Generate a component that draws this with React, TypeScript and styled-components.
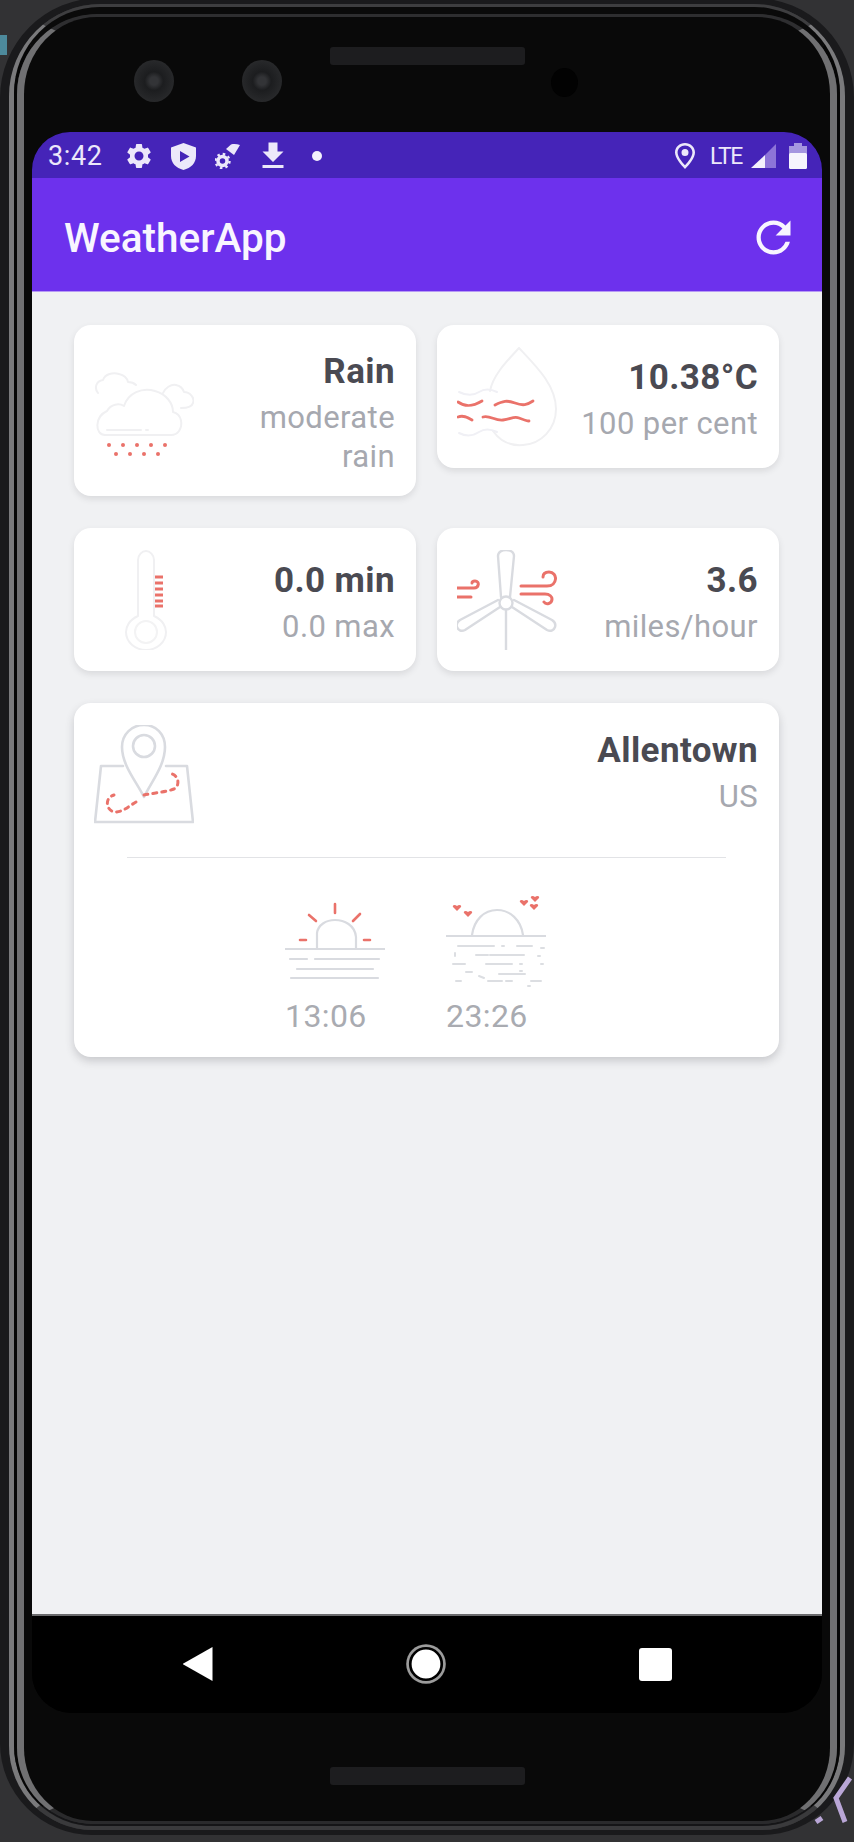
import { FC } from "react";
import styled, { createGlobalStyle } from "styled-components";
import { MdRefresh, MdSettings, MdFileDownload } from "react-icons/md";

const GlobalStyle = createGlobalStyle`
  html, body {
    margin: 0;
    padding: 0;
    background: #323234;
  }
  * {
    box-sizing: border-box;
  }
`;

const RED = "#ea726a";
const FAINT = "#f0f0f2";
const LINE = "#d9dbe0";

const Page = styled.div`
  position: relative;
  width: 854px;
  height: 1842px;
  overflow: hidden;
  background: #323234;
  font-family: Roboto, "Liberation Sans", sans-serif;
`;

const Phone = styled.div`
  height: 1837px;
  margin-top: -2px;
  border: solid #1a1a1c;
  border-width: 6px 9px 5px;
  border-radius: 100px 100px 92px 92px;
`;

const OuterRim = styled.div`
  height: 100%;
  border: solid #7a7a7c;
  border-color: #3e3e40 #7a7a7c #3a3a3c;
  border-width: 3px 5px 4px;
  border-radius: 92px 92px 84px 84px;
`;

const Groove = styled.div`
  height: 100%;
  border: solid #060606;
  border-color: #0a0a0a #060606 #151517;
  border-width: 7px 3px 2px;
  border-radius: 86px 86px 80px 80px;
`;

const InnerRim = styled.div`
  height: 100%;
  background: #090909;
  border: solid #707072;
  border-color: #2e2e30 #707072 #2a2a2c;
  border-width: 3px 7px;
  border-radius: 80px 80px 76px 76px;
`;

const Face = styled.div`
  display: flex;
  flex-direction: column;
  height: 100%;
  padding: 0 8px;
`;

const TopBezel = styled.div`
  position: relative;
  flex: none;
  height: 115px;
`;

const Camera = styled.div<{ $left: number }>`
  position: absolute;
  top: 43px;
  left: ${(p) => p.$left}px;
  width: 40px;
  height: 42px;
  border-radius: 50%;
  background: radial-gradient(circle, #333437 0 14%, #1c1d1f 32%, #28292b 72%, #131415 100%);
`;

const Speaker = styled.div<{ $top: number }>`
  position: absolute;
  top: ${(p) => p.$top}px;
  left: 298px;
  width: 195px;
  height: 18px;
  border-radius: 3px;
  background: #1d1d1f;
`;

const Sensor = styled.div`
  position: absolute;
  top: 51px;
  left: 519px;
  width: 27px;
  height: 29px;
  border-radius: 50%;
  background: #020202;
`;

const Screen = styled.div`
  flex: none;
  display: flex;
  flex-direction: column;
  height: 1581px;
  border-radius: 38px 38px 40px 40px;
  overflow: hidden;
  background: #000;
`;

const StatusBar = styled.div`
  flex: none;
  display: flex;
  align-items: center;
  height: 46px;
  padding: 2px 15px 0 16px;
  background: #4524b8;
  color: #ece8fa;
`;

const Clock = styled.span`
  font-size: 27px;
  letter-spacing: 0.6px;
  margin-right: 22px;
`;

const StatusSlot = styled.span<{ $gap: number }>`
  display: flex;
  align-items: center;
  justify-content: center;
  margin-right: ${(p) => p.$gap}px;
`;

const StatusDot = styled.span`
  width: 10px;
  height: 10px;
  border-radius: 50%;
  background: #f3f1fc;
`;

const Spacer = styled.div`
  flex: 1;
`;

const Lte = styled.span`
  font-size: 23px;
  letter-spacing: -1.4px;
  margin-right: 9px;
`;

const Toolbar = styled.div`
  flex: none;
  display: flex;
  align-items: center;
  justify-content: space-between;
  height: 114px;
  padding: 6px 23px 0 32px;
  background: #6d31ed;
  border-bottom: 1px solid #b79af5;
  color: #f8f5ff;
`;

const ToolbarTitle = styled.div`
  font-size: 40.5px;
  font-weight: 500;
`;

const Content = styled.div`
  flex: none;
  height: 1324px;
  padding: 33px 43px 0 42px;
  background: #f0f1f3;
  border-bottom: 2px solid #6a6a6c;
`;

const Grid = styled.div`
  display: grid;
  grid-template-columns: 342px 342px;
  column-gap: 21px;
  row-gap: 32px;
  align-items: start;
`;

const Card = styled.div`
  display: flex;
  align-items: center;
  justify-content: space-between;
  min-height: 143px;
  padding: 20px 21px 20px 20px;
  background: #fff;
  border-radius: 17px;
  box-shadow: 0 3px 6px rgba(60, 60, 70, 0.13);
`;

const WideCard = styled.div`
  grid-column: 1 / span 2;
  padding: 22px 21px 21px 20px;
  background: #fff;
  border-radius: 17px;
  box-shadow: 0 4px 8px rgba(60, 60, 70, 0.22);
`;

const WideHead = styled.div`
  display: flex;
  justify-content: space-between;
`;

const CardText = styled.div`
  padding-top: 6px;
  text-align: right;
`;

const HeadText = styled(CardText)`
  padding-top: 5px;
`;

const Title = styled.div`
  font-size: 35px;
  line-height: 42px;
  font-weight: 700;
  letter-spacing: 0.4px;
  color: #4a4a52;
`;

const Sub = styled.div<{ $wrap?: number }>`
  margin-top: 5px;
  max-width: ${(p) => (p.$wrap ? `${p.$wrap}px` : "none")};
  margin-left: auto;
  font-size: 31px;
  line-height: 39px;
  letter-spacing: 0.4px;
  color: #a6a8af;
`;

const Divider = styled.div`
  height: 1px;
  margin: 32px 32px 36px 33px;
  background: #e2e3e6;
`;

const SunRow = styled.div`
  display: flex;
  gap: 61px;
  padding-left: 191px;
`;

const SunItem = styled.div`
  width: 100px;
`;

const SunTime = styled.div`
  margin-top: 3px;
  font-size: 32px;
  line-height: 39px;
  letter-spacing: 0.4px;
  color: #a9abb1;
`;

const NavBar = styled.div`
  flex: none;
  display: flex;
  align-items: center;
  justify-content: center;
  gap: 194px;
  height: 97px;
  padding-bottom: 1px;
  background: #000;
`;

const NavBack = styled.div`
  width: 30px;
  height: 34px;
  background: #fff;
  clip-path: polygon(100% 0, 100% 100%, 0 50%);
`;

const NavHome = styled.div`
  width: 38px;
  height: 38px;
  border-radius: 50%;
  background: #fff;
  border: 3px solid #000;
  box-shadow: 0 0 0 3px #9c9c9c;
  transform: scale(0.9);
`;

const NavRecent = styled.div`
  width: 33px;
  height: 33px;
  border-radius: 3px;
  background: #fff;
`;

const Chin = styled.div`
  position: relative;
  flex: 1;
`;

const Scrap = styled.div`
  position: absolute;
  left: 0;
  top: 35px;
  width: 7px;
  height: 20px;
  background: #4d8a9c;
`;

const Corner = styled.svg`
  position: absolute;
  right: 0;
  bottom: 16px;
  filter: blur(0.6px);
`;

const Art = styled.svg`
  display: block;
  flex: none;
  width: 100px;
  height: 100px;
  fill: none;
  stroke-linecap: round;
  stroke-linejoin: round;
  filter: blur(0.6px);
`;

const SmallIcon = styled.svg`
  display: block;
`;

const CloudArt: FC = () => (
  <Art viewBox="0 0 100 100">
    <g stroke={FAINT} strokeWidth="2">
      <path d="M11 74C1 74 0 56 13 50c4-7 12-8 17-5 4-13 18-19 31-15 11 3 18 12 18 21 9 2 10 13 6 19-2 3-5 4-8 4z" />
      <path d="M4 32c-4-5-2-12 5-13 2-6 10-8 16-6 5 1 8 4 9 8 3 0 6 1 8 3" />
      <path d="M69 32c2-5 8-9 13-8 5 1 7 4 8 7 6 0 11 6 9 11-1 4-6 5-12 5" />
      <path d="M13 69h34M52 69h2" />
    </g>
    <g fill={RED}>
      {[15, 29, 43, 57, 71].map((x) => (
        <circle key={x} cx={x} cy="84" r="2" />
      ))}
      {[22, 36, 50, 64].map((x) => (
        <circle key={x} cx={x} cy="93" r="2" />
      ))}
    </g>
  </Art>
);

const DropArt: FC = () => (
  <Art viewBox="0 0 100 100">
    <path
      d="M62 1C50 14 36 28 33 44M36 84c7 10 18 15 30 14 18-1 33-16 33-36C99 38 78 18 62 1"
      stroke={FAINT}
      strokeWidth="2"
    />
    <path d="M2 45c8 4 14 4 20 0s12-3 18 0M2 86c8 4 14 3 20-1s12-3 18 0" stroke="#f0f0f5" strokeWidth="2" />
    <g stroke={RED} strokeWidth="2.8">
      <path d="M1 55c7 5 14 5 24-1M38 58c8-4 12-5 20-2s12 2 18-2" />
      <path d="M1 70c5-2 9 0 14 3M26 70c7-2 12 4 20 3s11-4 16-2 8 3 10 3" />
    </g>
  </Art>
);

const ThermoArt: FC = () => (
  <Art viewBox="0 0 100 100">
    <path
      d="M44 66V10c0-5 4-9 8-9s8 4 8 9v56c9 4 12 11 12 16 0 10-9 18-20 18s-20-8-20-18c0-5 3-12 12-16z"
      stroke={FAINT}
      strokeWidth="2"
    />
    <circle cx="52" cy="82" r="11" stroke="#f3f3f4" strokeWidth="2" />
    <g stroke={RED} strokeWidth="3" strokeLinecap="butt">
      {[27, 33, 39, 45, 51, 56].map((y) => (
        <path key={y} d={`M61 ${y}h8`} />
      ))}
    </g>
  </Art>
);

const WindArt: FC = () => (
  <Art viewBox="0 0 100 100">
    <g stroke={LINE} strokeWidth="2.4">
      <path d="M44 47 41 6c0-4 4-6 8-6s8 2 8 6l-4 41" />
      <circle cx="49" cy="53" r="6.5" />
      <path d="M43 57 8 80c-4 2-7 0-8-3s0-5 3-7l38-20" />
      <path d="M55 57 90 80c4 2 7 0 8-3s0-5-3-7L57 50" />
      <path d="M49 60v40" />
    </g>
    <g stroke={RED} strokeWidth="3">
      <path d="M0 38h17c5 0 6-7 1-7-2 0-3 1-3 2M0 47h14" />
      <path d="M64 36h26c11 0 11-14 2-14-4 0-6 2-6 5M64 44h24c5 0 7 3 7 5 0 5-6 6-8 3" />
    </g>
  </Art>
);

const MapArt: FC = () => (
  <Art viewBox="0 0 100 100">
    <g stroke={LINE} strokeWidth="2.6">
      <path d="M29 41H7L1 97h98l-6-56H72" />
      <path d="M50 72C42 56 28 40 28 22 28 9 38 0 50 0s21 9 21 22c0 18-13 34-21 50z" />
      <circle cx="50" cy="21" r="11" />
    </g>
    <path
      d="M50 70c10-2 22-3 30-6 6-3 5-13-2-15M42 77c-7 4-13 10-21 10-9-1-11-14-1-17"
      stroke={RED}
      strokeWidth="3"
      strokeDasharray="4 5"
    />
  </Art>
);

const SunriseArt: FC = () => (
  <Art viewBox="0 0 100 100">
    <g stroke={LINE} strokeWidth="2.2">
      <path d="M0 55h100" />
      <path d="M32 54V39c1-8 9-13 18-13s20 5 21 17v11" />
      <path d="M5 65h17M30 65h64M12 75h76M6 84h87" />
    </g>
    <g stroke={RED} strokeWidth="2.6">
      <path d="M50 10v9M24 21l7 6M75 20l-7 7M15 46h6M79 46h6" />
    </g>
  </Art>
);

const Heart: FC<{ x: number; y: number }> = ({ x, y }) => (
  <path d={`M${x} ${y + 3}l-4-4c-1-2 2-3 4-1 2-2 5-1 4 1z`} fill={RED} />
);

const SunsetArt: FC = () => (
  <Art viewBox="0 0 100 100">
    <g stroke={LINE} strokeWidth="2.2">
      <path d="M0 42h100" />
      <path d="M26 41c2-15 12-25 25-25s24 10 26 25" />
    </g>
    <g stroke="#dcdee2" strokeWidth="2">
      <path d="M12 52h36M56 52h2M71 52h15M95 54h3" />
      <path d="M9 59v3M30 61h12M44 61h34M92 62h2" />
      <path d="M7 70h12M40 70h26M74 70h2M95 70h2" />
      <path d="M20 78h6M74 77h2M33 82l5 2M53 80h26" />
      <path d="M10 87h5M42 87h14M60 87h6M85 87h10M82 92h2" />
    </g>
    <Heart x={11} y={14} />
    <Heart x={22} y={20} />
    <Heart x={78} y={9} />
    <Heart x={89} y={5} />
    <Heart x={88} y={13} />
  </Art>
);

const ShieldIcon: FC = () => (
  <SmallIcon width="25" height="27" viewBox="0 0 25 27">
    <path fillRule="evenodd" fill="currentColor" d="M12.5 0 25 4.500V13c0 7-5 12-12.500 14C5 25 0 20 0 13V4.500zM9 8v11l9.500-5.500z" />
  </SmallIcon>
);

const BeamIcon: FC = () => (
  <SmallIcon width="25" height="25" viewBox="0 0 25 25">
    <path fill="currentColor" d="M11 5 16 .5c3-.8 6-.4 9 .5l-6 10z" />
    <g fill="none" stroke="currentColor">
      <circle cx="7.500" cy="17" r="4.500" strokeWidth="3.500" />
      <circle cx="7.500" cy="17" r="7" strokeWidth="2.400" strokeDasharray="2.500 3" />
    </g>
  </SmallIcon>
);

const PinIcon: FC = () => (
  <SmallIcon width="20" height="26" viewBox="0 0 20 26">
    <path
      fillRule="evenodd"
      fill="currentColor"
      d="M10 0c5.500 0 10 4 10 9.500C20 15 14 22 10 26 6 22 0 15 0 9.500 0 4 4.500 0 10 0zm0 2.600c-4 0-7.400 3-7.400 6.900 0 3.800 3.800 9 7.400 12.800 3.600-3.800 7.400-9 7.400-12.800 0-3.900-3.400-6.900-7.400-6.900zM10 6a3.500 3.500 0 1 1 0 7 3.500 3.500 0 0 1 0-7z"
    />
  </SmallIcon>
);

const SignalIcon: FC = () => (
  <SmallIcon width="25" height="24" viewBox="0 0 25 24">
    <path fill="#8d74d8" d="M25 0v24H14V11z" />
    <path fill="#f3f1fc" d="M14 11v13H0z" />
  </SmallIcon>
);

const BatteryIcon: FC = () => (
  <SmallIcon width="18" height="26" viewBox="0 0 18 26">
    <path fill="#a596e0" d="M5 0h8v3h5v9H0V3h5z" />
    <rect y="10" width="18" height="16" rx="1.500" fill="#f6f4fd" />
  </SmallIcon>
);

const App: FC = () => {
  return (
    <Page>
      <GlobalStyle />
      <Scrap />
      <Phone>
        <OuterRim>
          <Groove>
            <InnerRim>
              <Face>
                <TopBezel>
                  <Camera $left={102} />
                  <Camera $left={210} />
                  <Speaker $top={30} />
                  <Sensor />
                </TopBezel>
                <Screen>
                  <StatusBar>
                    <Clock>3:42</Clock>
                    <StatusSlot $gap={17}>
                      <MdSettings size={30} />
                    </StatusSlot>
                    <StatusSlot $gap={19}>
                      <ShieldIcon />
                    </StatusSlot>
                    <StatusSlot $gap={15}>
                      <BeamIcon />
                    </StatusSlot>
                    <StatusSlot $gap={21}>
                      <MdFileDownload size={36} />
                    </StatusSlot>
                    <StatusDot />
                    <Spacer />
                    <StatusSlot $gap={15}>
                      <PinIcon />
                    </StatusSlot>
                    <Lte>LTE</Lte>
                    <StatusSlot $gap={13}>
                      <SignalIcon />
                    </StatusSlot>
                    <BatteryIcon />
                  </StatusBar>
                  <Toolbar>
                    <ToolbarTitle>WeatherApp</ToolbarTitle>
                    <MdRefresh size={51} />
                  </Toolbar>
                  <Content>
                    <Grid>
                      <Card>
                        <CloudArt />
                        <CardText>
                          <Title>Rain</Title>
                          <Sub $wrap={150}>moderate rain</Sub>
                        </CardText>
                      </Card>
                      <Card>
                        <DropArt />
                        <CardText>
                          <Title>10.38°C</Title>
                          <Sub>100 per cent</Sub>
                        </CardText>
                      </Card>
                      <Card>
                        <ThermoArt />
                        <CardText>
                          <Title>0.0 min</Title>
                          <Sub>0.0 max</Sub>
                        </CardText>
                      </Card>
                      <Card>
                        <WindArt />
                        <CardText>
                          <Title>3.6</Title>
                          <Sub>miles/hour</Sub>
                        </CardText>
                      </Card>
                      <WideCard>
                        <WideHead>
                          <MapArt />
                          <HeadText>
                            <Title>Allentown</Title>
                            <Sub>US</Sub>
                          </HeadText>
                        </WideHead>
                        <Divider />
                        <SunRow>
                          <SunItem>
                            <SunriseArt />
                            <SunTime>13:06</SunTime>
                          </SunItem>
                          <SunItem>
                            <SunsetArt />
                            <SunTime>23:26</SunTime>
                          </SunItem>
                        </SunRow>
                      </WideCard>
                    </Grid>
                  </Content>
                  <NavBar>
                    <NavBack />
                    <NavHome />
                    <NavRecent />
                  </NavBar>
                </Screen>
                <Chin>
                  <Speaker $top={54} />
                </Chin>
              </Face>
            </InnerRim>
          </Groove>
        </OuterRim>
      </Phone>
      <Corner width="42" height="50" viewBox="0 0 42 50">
        <path d="M38 2 24 22l9 24M4 46l6-4" stroke="#b9a6d6" strokeWidth="5" fill="none" />
      </Corner>
    </Page>
  );
};

export default App;
